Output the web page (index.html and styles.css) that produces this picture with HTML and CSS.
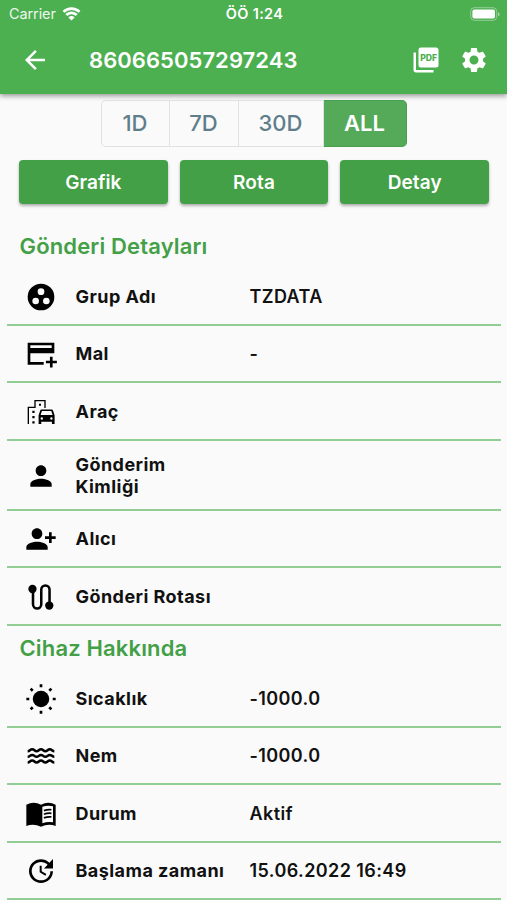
FILE: index.html
```html
<!DOCTYPE html>
<html lang="tr">
<head>
  <meta charset="UTF-8">
  <meta name="viewport" content="width=device-width, initial-scale=1.0">
  <title>860665057297243</title>
  <link rel="stylesheet" href="styles.css">
</head>
<body>
<header class="header">
  <div class="status-bar">
    <div class="carrier">
      <span>Carrier</span>
      <svg class="wifi" viewBox="0 0 18 14" fill="none" stroke="currentColor" stroke-width="2.7">
        <path class="arcs" d="M1 4.9a11.4 11.4 0 0 1 16 0M3.8 8a7.4 7.4 0 0 1 10.4 0"/>
        <path d="M9 13.6L5.9 10.4a4.4 4.4 0 0 1 6.2 0z" fill="currentColor" stroke="none"/>
      </svg>
    </div>
    <span class="clock">ÖÖ 1:24</span>
    <div class="battery-wrap">
      <svg class="battery" viewBox="0 0 30 14">
        <rect x=".7" y=".7" width="26" height="12.6" rx="3.6" fill="none" stroke="#fff" stroke-opacity=".4"/>
        <rect x="2.4" y="2.4" width="22.6" height="9.2" rx="2" fill="#fff"/>
        <path d="M28 5v4.4q1.6-.8 1.6-2.2T28 5z" fill="#fff" fill-opacity=".5"/>
      </svg>
    </div>
  </div>
  <div class="app-bar">
    <svg class="icon-sm" viewBox="0 0 24 24"><path d="M20 11H7.83l5.59-5.59L12 4l-8 8 8 8 1.41-1.41L7.83 13H20v-2z"/></svg>
    <h1>860665057297243</h1>
    <svg class="icon-sm pdf" viewBox="0 0 24 24">
      <rect x="6" y="2" width="16" height="16" rx="2"/>
      <path d="M4 6H2v14c0 1.1.9 2 2 2h14v-2H4V6z"/>
      <text x="14.1" y="12.6" text-anchor="middle" textLength="13.6" lengthAdjust="spacingAndGlyphs">PDF</text>
    </svg>
    <svg class="icon-sm" viewBox="0 0 24 24"><path d="M19.14 12.94c.04-.3.06-.61.06-.94 0-.32-.02-.64-.07-.94l2.03-1.58c.18-.14.23-.41.12-.61l-1.92-3.32c-.12-.22-.37-.29-.59-.22l-2.39.96c-.5-.38-1.03-.7-1.62-.94l-.36-2.54c-.04-.24-.24-.41-.48-.41h-3.84c-.24 0-.43.17-.47.41l-.36 2.54c-.59.24-1.13.57-1.62.94l-2.39-.96c-.22-.08-.47 0-.59.22L2.74 8.87c-.12.21-.08.47.12.61l2.03 1.58c-.05.3-.09.63-.09.94s.02.64.07.94l-2.03 1.58c-.18.14-.23.41-.12.61l1.92 3.32c.12.22.37.29.59.22l2.39-.96c.5.38 1.03.7 1.62.94l.36 2.54c.05.24.24.41.48.41h3.84c.24 0 .44-.17.47-.41l.36-2.54c.59-.24 1.13-.56 1.62-.94l2.39.96c.22.08.47 0 .59-.22l1.92-3.32c.12-.22.07-.47-.12-.61l-2.01-1.58zM12 15.6c-1.98 0-3.6-1.62-3.6-3.6s1.62-3.6 3.6-3.6 3.6 1.62 3.6 3.6-1.62 3.6-3.6 3.6z"/></svg>
  </div>
</header>

<main>
  <div class="range">
    <button class="r1">1D</button>
    <button class="r7">7D</button>
    <button class="r30">30D</button>
    <button class="all active">ALL</button>
  </div>

  <div class="actions">
    <button>Grafik</button>
    <button>Rota</button>
    <button>Detay</button>
  </div>

  <section>
    <h2>Gönderi Detayları</h2>
    <div class="row">
      <svg class="icon" viewBox="0 0 24 24"><path fill-rule="evenodd" d="M12 2a10 10 0 1 0 0 20 10 10 0 0 0 0-20zM8 17.5a2.5 2.5 0 1 1 0-5 2.5 2.5 0 0 1 0 5zM12 10.5a2.5 2.5 0 1 1 0-5 2.5 2.5 0 0 1 0 5zM16 17.5a2.5 2.5 0 1 1 0-5 2.5 2.5 0 0 1 0 5z"/></svg>
      <span class="label">Grup Adı</span>
      <span class="value">TZDATA</span>
    </div>
    <div class="row">
      <svg class="icon" viewBox="0 0 24 24"><path fill-rule="evenodd" d="M2 3.5h20v8H4v6.5h10v2H2zM4 5.5v2h16v-2zM18.7 14h2v3h3.2v2h-3.2v3.2h-2V19h-3v-2h3z"/></svg>
      <span class="label">Mal</span>
      <span class="value">-</span>
    </div>
    <div class="row">
      <svg class="icon" viewBox="0 0 24 24">
        <path d="M2.5 21V8.5h5v-5H15V9" fill="none" stroke="currentColor"/>
        <path d="M10.5 5.8H12v1.5h-1.5zM5.5 11h1.7v1.7H5.5zM5.5 15h1.7v1.7H5.5zM5.5 19h1.7v1.7H5.5z"/>
        <path fill-rule="evenodd" d="M12.3 10.2h7.7q.8 0 1 .7l1.2 3.6V21h-2v-1.6h-8V21h-2v-6.5l1.2-3.6q.2-.7.900-.7zM12.7 11.2l-1 3h9l-1-3zM12.6 16a.9.9 0 1 0 0 1.800.9.9 0 0 0 0-1.800zM19.8 16a.9.9 0 1 0 0 1.800.9.9 0 0 0 0-1.800z"/>
      </svg>
      <span class="label">Araç</span>
      <span class="value"></span>
    </div>
    <div class="row tall">
      <svg class="icon" viewBox="0 0 24 24"><path d="M12 12c2.21 0 4-1.79 4-4s-1.79-4-4-4-4 1.79-4 4 1.79 4 4 4zm0 2c-2.67 0-8 1.34-8 4v2h16v-2c0-2.66-5.33-4-8-4z"/></svg>
      <span class="label">Gönderim Kimliği</span>
      <span class="value"></span>
    </div>
    <div class="row">
      <svg class="icon" viewBox="0 0 24 24"><path d="M13 8c0-2.21-1.79-4-4-4S5 5.79 5 8s1.79 4 4 4 4-1.79 4-4zm2 2v2h3v3h2v-3h3v-2h-3V7h-2v3h-3zM1 18v2h16v-2c0-2.66-5.33-4-8-4s-8 1.34-8 4z"/></svg>
      <span class="label">Alıcı</span>
      <span class="value"></span>
    </div>
    <div class="row">
      <svg class="icon" viewBox="0 0 24 24">
        <path d="M6 6v11.5a3.1 3.1 0 0 0 6.2 0V6.500a3.1 3.1 0 0 1 6.2 0V18" fill="none" stroke="currentColor" stroke-width="1.9"/>
        <circle cx="5.6" cy="6" r="3.1"/><circle cx="18.2" cy="18.4" r="3.1"/>
      </svg>
      <span class="label">Gönderi Rotası</span>
      <span class="value"></span>
    </div>
  </section>

  <section>
    <h2>Cihaz Hakkında</h2>
    <div class="row">
      <svg class="icon" viewBox="0 0 24 24">
        <circle cx="12" cy="12" r="6.2"/>
        <path d="M12 1v2.2M12 20.800V23M1 12h2.200M20.800 12H23M4.200 4.200l1.600 1.600M18.200 18.200l1.600 1.600M4.200 19.800l1.600-1.600M18.200 5.800l1.600-1.600" stroke="currentColor" stroke-width="2"/>
      </svg>
      <span class="label">Sıcaklık</span>
      <span class="value">-1000.0</span>
    </div>
    <div class="row">
      <svg class="icon" viewBox="0 0 24 24"><path d="M2 8.400c1.700 0 1.700-1.400 3.400-1.400s1.700 1.400 3.300 1.400 1.700-1.400 3.300-1.400 1.700 1.400 3.300 1.400 1.700-1.400 3.300-1.400 1.700 1.400 3.400 1.400M2 12.600c1.700 0 1.700-1.400 3.400-1.400s1.700 1.400 3.300 1.400 1.700-1.400 3.300-1.400 1.700 1.400 3.300 1.400 1.700-1.400 3.300-1.400 1.700 1.400 3.400 1.400M2 16.800c1.700 0 1.700-1.400 3.400-1.400s1.700 1.400 3.300 1.400 1.700-1.400 3.300-1.400 1.700 1.400 3.300 1.400 1.700-1.400 3.300-1.400 1.700 1.400 3.400 1.400" fill="none" stroke="currentColor" stroke-width="1.900"/></svg>
      <span class="label">Nem</span>
      <span class="value">-1000.0</span>
    </div>
    <div class="row">
      <svg class="icon" viewBox="0 0 24 24">
        <path fill-rule="evenodd" d="M12 5q-5.500-3-11 0v16q5.500-2.200 11 .5 5.500-2.700 11-.5V5q-5.500-3-11 0zM13 6.500V19q4-1.600 8-.8V6.100q-4-.9-8 .4z"/>
        <path d="M14.200 9.500q2.900-1.100 5.600-.7M14.200 12.200q2.900-1.100 5.600-.7M14.200 14.900q2.900-1.100 5.600-.7" fill="none" stroke="currentColor" stroke-width="1.300"/>
      </svg>
      <span class="label">Durum</span>
      <span class="value">Aktif</span>
    </div>
    <div class="row">
      <svg class="icon" viewBox="0 0 24 24"><path d="M21 10.120h-6.780l2.740-2.820c-2.730-2.700-7.150-2.800-9.880-.1-2.730 2.710-2.730 7.080 0 9.790s7.150 2.710 9.880 0C18.320 15.650 19 14.080 19 12.100h2c0 1.980-.880 4.550-2.640 6.290-3.510 3.480-9.210 3.480-12.720 0-3.500-3.470-3.530-9.110-.020-12.580s9.140-3.470 12.650 0L21 3v7.120zM12.500 8v4.250l3.500 2.080-.720 1.210L11 13V8h1.500z"/></svg>
      <span class="label">Başlama zamanı</span>
      <span class="value">15.06.2022 16:49</span>
    </div>
  </section>
</main>
</body>
</html>
```
FILE: styles.css
```css
body {
    font-family: Inter, Roboto, sans-serif;
    background-color: #fafafa;
    color: #111;
    margin: 0;
    height: 900px;
    overflow: hidden;
}
svg {
    display: block;
    fill: currentColor;
    flex: none;
}
h1, h2 {
    margin: 0;
    white-space: nowrap;
}
button {
    font-family: inherit;
    padding: 0;
    border: none;
    cursor: pointer;
}
.header {
    background-color: #4caf50;
    color: white;
    height: 94px;
    box-shadow: 0 2px 5px rgba(0, 0, 0, 0.4);
}
.status-bar {
    display: grid;
    grid-template-columns: 1fr auto 1fr;
    align-items: center;
    height: 27px;
    padding: 0 7px 0 9px;
    font-size: 14.5px;
}
.carrier {
    display: flex;
    align-items: center;
    gap: 6px;
}
.carrier span {
    opacity: 0.9;
    letter-spacing: -0.1px;
}
.wifi {
    width: 19px;
    height: 14px;
}
.wifi .arcs {
    fill: none;
}
.clock {
    font-weight: 600;
    letter-spacing: 0.3px;
}
.battery-wrap {
    display: flex;
    justify-content: flex-end;
}
.battery {
    width: 30px;
    height: 14px;
}
.app-bar {
    display: flex;
    align-items: center;
    height: 66px;
    padding: 0 18px 0 20px;
}
.app-bar h1 {
    flex: 1;
    margin-left: 39px;
    font-size: 22px;
    font-weight: 600;
    letter-spacing: 0.05px;
}
.icon-sm {
    width: 30px;
    height: 30px;
}
.pdf {
    margin-right: 18px;
}
.pdf text {
    font-size: 6.6px;
    font-weight: 800;
    fill: #4caf50;
}
.range {
    display: flex;
    width: 306px;
    height: 47px;
    margin: 5.5px auto 0;
    box-sizing: border-box;
}
.range button {
    box-sizing: border-box;
    background: none;
    border: 1px solid #dfe2e3;
    border-left-width: 0;
    color: #607d8b;
    font-size: 22px;
    font-weight: 500;
}
.range .r1 {
    width: 69px;
    border-left-width: 1px;
    border-radius: 5px 0 0 5px;
}
.range .r7 {
    width: 69px;
}
.range .r30 {
    width: 85px;
}
.range .all {
    width: 83px;
    border-radius: 0 5px 5px 0;
}
.range .active {
    background-color: #55aa59;
    border-color: #4a9e4e;
    color: white;
    font-weight: 600;
}
.actions {
    display: flex;
    gap: 12px;
    padding: 13px 18px 0 19px;
}
.actions button {
    flex: 1;
    height: 44px;
    padding-top: 1px;
    border-radius: 4px;
    background-color: #43a047;
    color: white;
    font-size: 19px;
    font-weight: 600;
    letter-spacing: 0.1px;
    box-shadow: 0 2px 3px rgba(0, 0, 0, 0.3);
}
h2 {
    padding-left: 19.5px;
    color: #43a047;
    font-size: 22px;
    font-weight: 600;
    letter-spacing: 0.15px;
    line-height: 44.5px;
}
.actions + section {
    padding-top: 20px;
}
.row {
    display: flex;
    align-items: center;
    box-sizing: border-box;
    height: 57.5px;
    margin: 0 6px 0 7px;
    padding: 2px 0 0 18px;
    border-bottom: 2px solid #92cd95;
    font-size: 18px;
    line-height: 22px;
}
.row.tall {
    height: 70px;
}
.icon {
    width: 32px;
    height: 32px;
    color: #000;
}
.label {
    width: 151px;
    margin-left: 18.5px;
    margin-right: 23px;
    font-weight: 650;
    letter-spacing: 0.45px;
    white-space: nowrap;
}
.tall .label {
    width: 110px;
    white-space: normal;
}
.value {
    font-weight: 600;
    letter-spacing: 0.4px;
}
```
